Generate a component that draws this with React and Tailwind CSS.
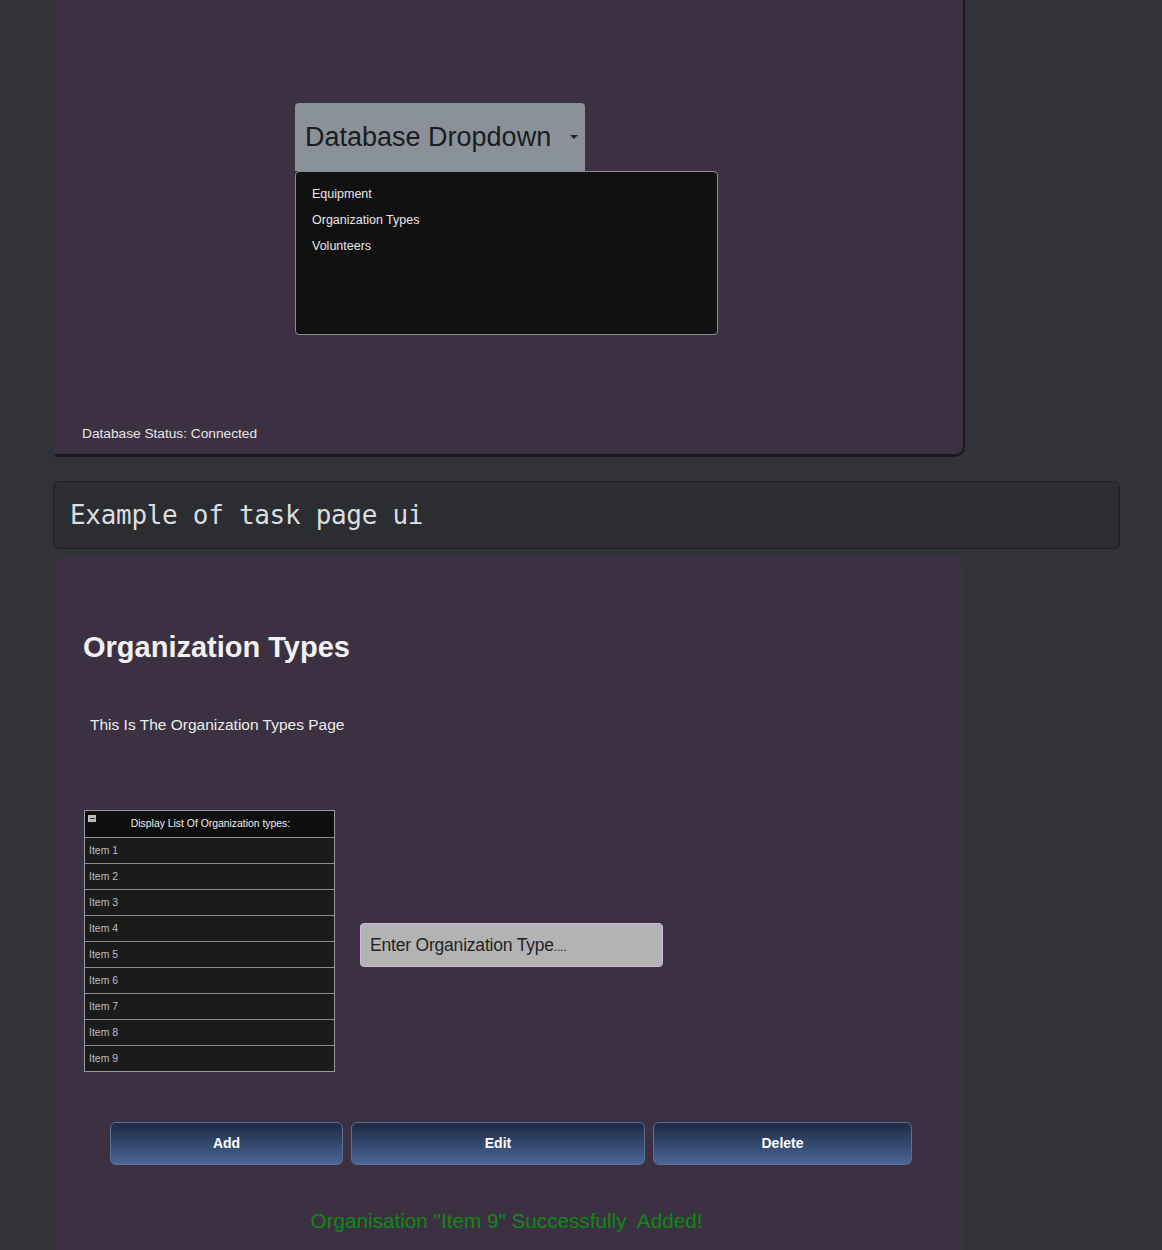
const dbItems = ['Equipment', 'Organization Types', 'Volunteers']
const orgItems = ['Item 1', 'Item 2', 'Item 3', 'Item 4', 'Item 5', 'Item 6', 'Item 7', 'Item 8', 'Item 9']

const sans = { fontFamily: '"Liberation Sans", Arial, sans-serif' }

export default function App() {
  return (
    <div className="min-h-[1250px] bg-[#313338] overflow-hidden" style={sans}>
      {/* Database dropdown demo */}
      <div className="ml-[55px] w-[910px] h-[457px] bg-[#3b3142] rounded-br-[10px] border-r-2 border-b-[3px] border-[#1b191f] flex flex-col">
        <div className="pl-[240px] pt-[103px]">
          <div className="w-[290px] h-[68px] bg-[#8b9198] rounded-t-[4px] flex items-center pl-[10px]">
            <span className="text-[27px] text-[#1b1c1f] leading-none">Database Dropdown</span>
            <span className="ml-[19px] w-0 h-0 border-l-[4px] border-r-[4px] border-t-[4px] border-l-transparent border-r-transparent border-t-[#222]" />
          </div>
          <div className="w-[423px] h-[164px] bg-[#111111] border border-[#8d8d8d] rounded-[4px] pt-[14px] pl-[16px] flex flex-col gap-[9px]">
            {dbItems.map(item => (
              <div key={item} className="text-[12.5px] leading-[17px] text-[#e8e8e8]">{item}</div>
            ))}
          </div>
        </div>
        <div className="mt-auto mb-[9px] ml-[27px] text-[13.7px] text-[#e6e6e6]">Database Status: Connected</div>
      </div>

      {/* Code block */}
      <div className="ml-[53px] mt-[24px] w-[1067px] h-[68px] bg-[#2b2d31] border border-[#1e1f22] rounded-[6px] flex items-center px-[16px]">
        <span className="text-[26px] text-[#dbdee1] tracking-[-0.3px]" style={{ fontFamily: '"DejaVu Sans Mono", "Liberation Mono", monospace' }}>
          Example of task page ui
        </span>
      </div>

      {/* Task page panel */}
      <div className="ml-[55px] mt-[8px] w-[907px] h-[700px] bg-[#3b3142] rounded-t-[8px]">
        <h1 className="pt-[72px] pl-[28px] text-[29px] font-bold text-[#f2f2f2] leading-[36px]">Organization Types</h1>
        <p className="mt-[50px] pl-[35px] text-[15.5px] text-[#ececec] leading-[20px]">This Is The Organization Types Page</p>

        <div className="mt-[75px] pl-[29px] flex items-center">
          <div className="w-[251px] border border-[#9a9a9a] bg-[#1b1b1b]">
            <div className="h-[26px] bg-[#0e0e0e] flex items-center justify-center relative">
              <span className="absolute left-[3px] top-[4px] w-[8px] h-[7px] bg-[#bdbdbd] flex items-center justify-center">
                <span className="w-[5px] h-[1px] bg-[#333]" />
              </span>
              <span className="text-[10.4px] text-[#eeeeee] pl-[2px]">Display List Of Organization types:</span>
            </div>
            {orgItems.map(item => (
              <div key={item} className="h-[26px] border-t border-[#8c8c8c] flex items-center pl-[4px] text-[10.5px] text-[#bdbdbd]">
                {item}
              </div>
            ))}
          </div>
          <div className="ml-[25px] mt-[8px] w-[303px] h-[44px] bg-[#b3b3b3] border border-[#d4b4e6] rounded-[4px] flex items-center pl-[9px]">
            <span className="text-[17.5px] text-[#232323] tracking-[-0.2px]">Enter Organization Type<span className="text-[12px]">....</span></span>
          </div>
        </div>

        <div className="mt-[50px] pl-[55px] flex gap-[8px]">
          {[['Add', 'w-[233px]'], ['Edit', 'w-[294px]'], ['Delete', 'w-[259px]']].map(([label, w]) => (
            <button key={label} className={`${w} h-[43px] rounded-[6px] border border-[#5b6f98] bg-gradient-to-b from-[#1f2a44] to-[#4a6797] text-white text-[14px] font-bold`}>
              {label}
            </button>
          ))}
        </div>

        <div className="mt-[44px] text-center pr-[4px] text-[20.7px] text-[#0d8a12] leading-[24px]">
          Organisation "Item 9" Successfully&nbsp; Added!
        </div>
      </div>
    </div>
  )
}
